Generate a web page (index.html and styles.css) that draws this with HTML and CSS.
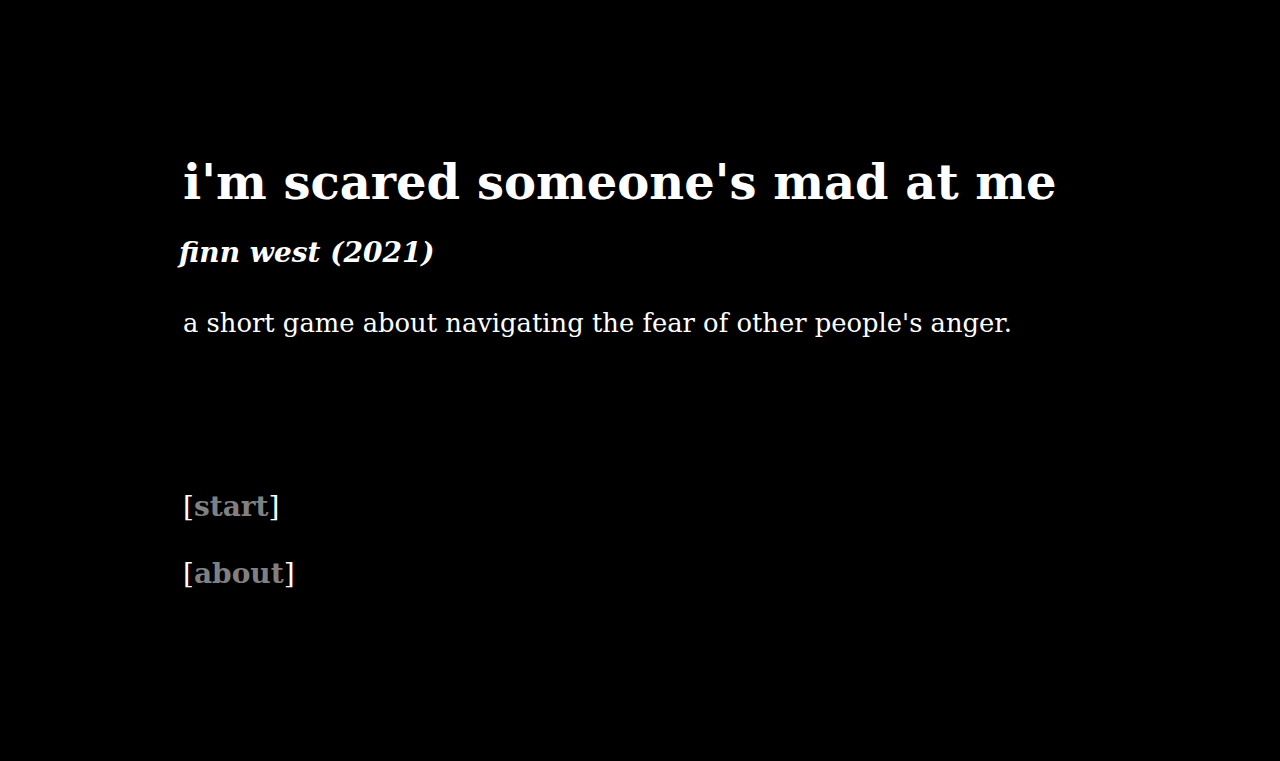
FILE: index.html
```html
<!DOCTYPE html>
<html>
<head>
<meta charset="utf-8">
<link rel="stylesheet" href="styles.css">
</head>
<body>
<main class="page">
  <h1 class="title">i'm scared someone's mad at me</h1>
  <h2 class="byline">finn west (2021)</h2>
  <p class="desc">a short game about navigating the fear of other people's anger.</p>
  <nav class="menu">
    <p class="item">[<a class="link" href="#">start</a>]</p>
    <p class="item">[<a class="link" href="#">about</a>]</p>
  </nav>
</main>
</body>
</html>
```
FILE: styles.css
```css
html, body {
  margin: 0;
  padding: 0;
  background: #000;
  height: 100%;
}
body {
  color: #fff;
  font-family: "DejaVu Serif", "Liberation Serif", serif;
}
.page {
  padding: 152px 0 0 183px;
}
.title {
  margin: 0;
  font-size: 48px;
  font-weight: bold;
  line-height: 60px;
}
.byline {
  margin: 21px 0 0 -4px;
  font-size: 28px;
  font-style: italic;
  font-weight: bold;
  line-height: 40px;
}
.desc {
  margin: 30px 0 0;
  font-size: 25.8px;
  line-height: 40px;
}
.menu {
  margin-top: 144px;
}
.item {
  margin: 0 0 27px;
  font-size: 28px;
  line-height: 40px;
}
.link {
  color: #808080;
  font-weight: bold;
  text-decoration: none;
}
```
